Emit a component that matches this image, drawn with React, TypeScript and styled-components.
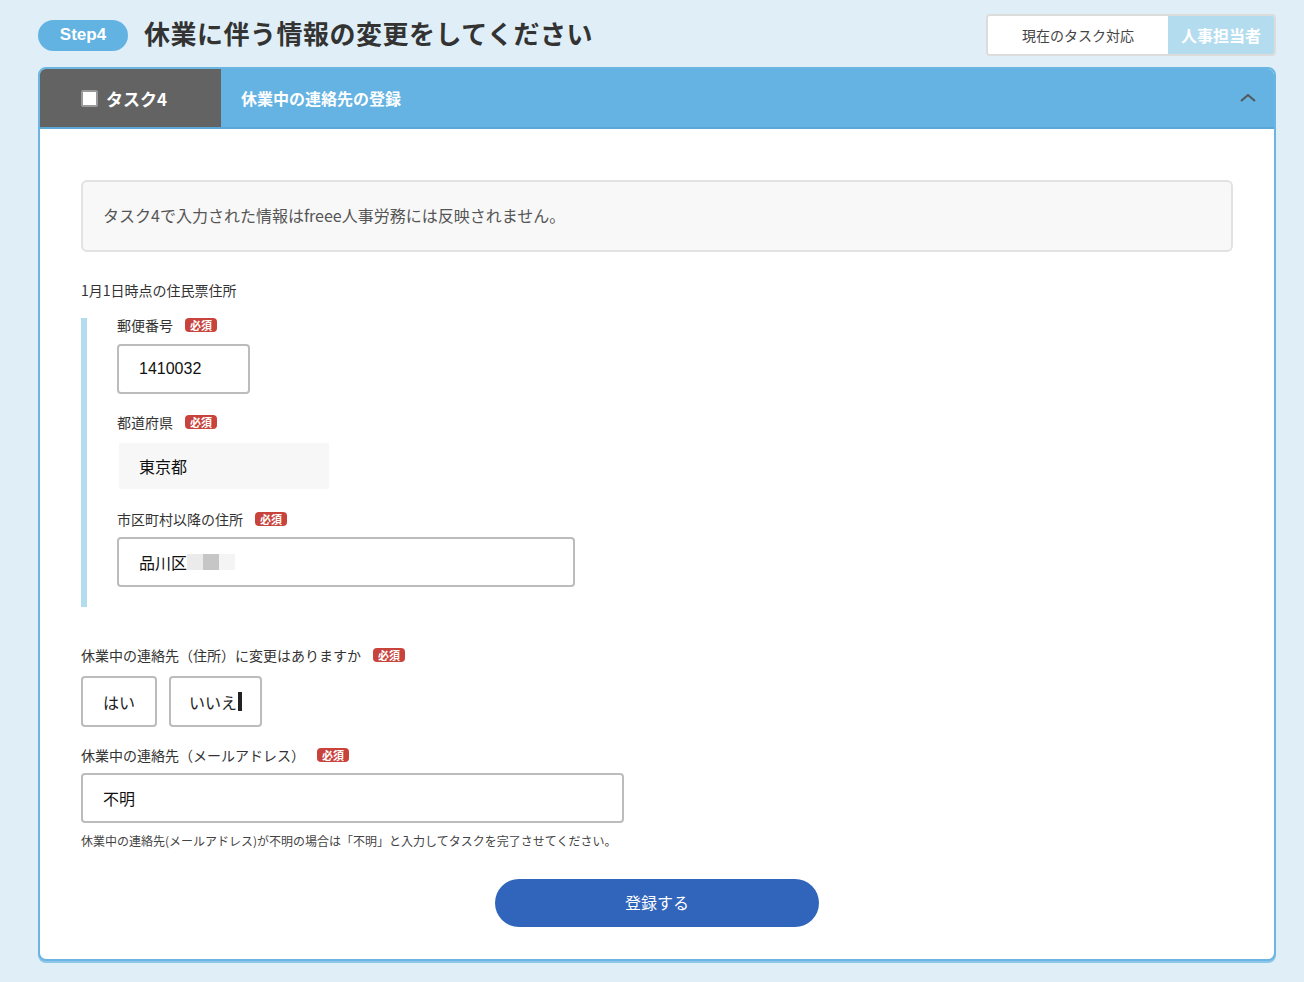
import React from "react";
import styled, { createGlobalStyle } from "styled-components";

const Global = createGlobalStyle`
  html, body { margin: 0; padding: 0; background: #e0eff7; }
  body { font-family: "Noto Sans CJK JP", "Noto Sans", "Liberation Sans", sans-serif; color: #333; }
  * { box-sizing: border-box; }
`;

const Page = styled.div`
  padding: 14px 28px 22px 38px;
`;

const TopBar = styled.div`
  display: flex;
  align-items: center;
  justify-content: space-between;
  margin-bottom: 11px;
`;

const TitleGroup = styled.div`
  display: flex;
  align-items: center;
  gap: 16px;
`;

const StepBadge = styled.div`
  width: 90px;
  height: 31px;
  border-radius: 16px;
  background: #62b2e2;
  color: #fff;
  font-family: "Liberation Sans", "Noto Sans", sans-serif;
  font-size: 17px;
  font-weight: 700;
  display: flex;
  align-items: center;
  justify-content: center;
`;

const Title = styled.h1`
  margin: 0 0 4px 0;
  font-size: 26px;
  line-height: 1.2;
  font-weight: 700;
  color: #333;
  letter-spacing: 0.5px;
`;

const Toggle = styled.div`
  display: flex;
  height: 42px;
  border: 2px solid #dcdcdc;
  border-radius: 4px;
  overflow: hidden;
`;

const ToggleItem = styled.div<{ $active?: boolean }>`
  display: flex;
  align-items: center;
  justify-content: center;
  width: ${(p) => (p.$active ? "106px" : "180px")};
  background: ${(p) => (p.$active ? "#b3dcef" : "#fff")};
  color: ${(p) => (p.$active ? "#fff" : "#444")};
  font-size: ${(p) => (p.$active ? "16px" : "14px")};
  font-weight: ${(p) => (p.$active ? 700 : 400)};
`;

const Card = styled.div`
  border: 2px solid #6bb5e2;
  border-radius: 8px;
  background: #fff;
  overflow: hidden;
  box-shadow: 0 2px 0 #8cc6e8;
`;

const CardHeader = styled.div`
  display: flex;
  height: 60px;
  background: #64b3e2;
  border-bottom: 2px solid #5aa8d8;
`;

const TaskTab = styled.div`
  width: 181px;
  background: #636363;
  display: flex;
  align-items: center;
  padding-left: 41px;
  gap: 8px;
  color: #fff;
  font-size: 17px;
  font-weight: 700;
`;

const CheckBox = styled.span`
  width: 17px;
  height: 17px;
  background: #fff;
  border: 2px solid #999;
  border-radius: 2px;
  display: inline-block;
`;

const HeaderTitle = styled.div`
  flex: 1;
  display: flex;
  align-items: center;
  justify-content: space-between;
  padding: 0 17px 0 20px;
  color: #fff;
  font-size: 16px;
  font-weight: 700;
`;

const CardBody = styled.div`
  padding: 51px 41px 32px 41px;
`;

const Notice = styled.div`
  height: 72px;
  background: #f8f8f8;
  border: 2px solid #e2e2e2;
  border-radius: 6px;
  display: flex;
  align-items: center;
  padding: 0 0 2px 20px;
  font-size: 16px;
  color: #555;
`;

const SectionLabel = styled.div`
  margin-top: 28px;
  font-size: 14px;
  line-height: 20px;
  color: #333;
`;

const AddressGroup = styled.div`
  margin-top: 18px;
  border-left: 6px solid #b3dcef;
  padding: 0 0 20px 30px;
`;

const Field = styled.div<{ $gap?: number }>`
  margin-top: ${(p) => p.$gap ?? 0}px;
`;

const Label = styled.div`
  display: flex;
  align-items: center;
  gap: 12px;
  font-size: 14px;
  line-height: 14px;
  color: #333;
  height: 14px;
`;

const Required = styled.span`
  display: inline-flex;
  align-items: center;
  justify-content: center;
  height: 14px;
  padding: 0 5px;
  border-radius: 4px;
  background: #c8433c;
  color: #fff;
  font-size: 11px;
  font-weight: 700;
  line-height: 1;
`;

const Input = styled.div<{ $w: number; $top?: number }>`
  margin-top: ${(p) => p.$top ?? 12}px;
  width: ${(p) => p.$w}px;
  height: 50px;
  border: 2px solid #bcbcbc;
  border-radius: 4px;
  background: #fff;
  display: flex;
  align-items: center;
  padding-left: 20px;
  font-size: 16px;
  color: #111;
`;

const NumText = styled.span`
  font-family: "Liberation Sans", "Noto Sans", sans-serif;
`;

const ReadOnly = styled.div`
  margin-top: 14px;
  margin-left: 2px;
  width: 210px;
  height: 46px;
  background: #f7f7f7;
  display: flex;
  align-items: center;
  padding-left: 20px;
  font-size: 16px;
  color: #111;
`;

const Blur = styled.span<{ $c: string; $w: number }>`
  display: inline-block;
  width: ${(p) => p.$w}px;
  height: 16px;
  background: ${(p) => p.$c};
`;

const Question = styled.div`
  margin-top: 41px;
`;

const Choices = styled.div`
  display: flex;
  gap: 12px;
  margin-top: 14px;
`;

const Choice = styled.div<{ $w: number }>`
  width: ${(p) => p.$w}px;
  height: 51px;
  border: 2px solid #bcbcbc;
  border-radius: 4px;
  display: flex;
  align-items: center;
  justify-content: center;
  font-size: 16px;
  color: #222;
`;

const Caret = styled.span`
  display: inline-block;
  width: 4px;
  height: 19px;
  background: #222;
  margin-left: 1px;
`;

const Help = styled.div`
  margin-top: 9px;
  font-size: 12px;
  color: #444;
`;

const SubmitRow = styled.div`
  display: flex;
  justify-content: center;
  margin-top: 30px;
`;

const Submit = styled.button`
  width: 324px;
  height: 48px;
  border: none;
  border-radius: 24px;
  background: #3164bb;
  color: #fff;
  font-family: inherit;
  font-size: 16px;
  padding-bottom: 3px;
  cursor: pointer;
`;

export default function App() {
  return (
    <>
      <Global />
      <Page>
        <TopBar>
          <TitleGroup>
            <StepBadge>Step4</StepBadge>
            <Title>休業に伴う情報の変更をしてください</Title>
          </TitleGroup>
          <Toggle>
            <ToggleItem>現在のタスク対応</ToggleItem>
            <ToggleItem $active>人事担当者</ToggleItem>
          </Toggle>
        </TopBar>
        <Card>
          <CardHeader>
            <TaskTab>
              <CheckBox />
              タスク4
            </TaskTab>
            <HeaderTitle>
              休業中の連絡先の登録
              <svg width="18" height="12" viewBox="0 0 18 12">
                <path d="M2 9 L9 3 L16 9" fill="none" stroke="#555" strokeWidth="2" />
              </svg>
            </HeaderTitle>
          </CardHeader>
          <CardBody>
            <Notice>タスク4で入力された情報はfreee人事労務には反映されません。</Notice>
            <SectionLabel>1月1日時点の住民票住所</SectionLabel>
            <AddressGroup>
              <Field>
                <Label>
                  郵便番号<Required>必須</Required>
                </Label>
                <Input $w={133} $top={12}>
                  <NumText>1410032</NumText>
                </Input>
              </Field>
              <Field $gap={21}>
                <Label>
                  都道府県<Required>必須</Required>
                </Label>
                <ReadOnly>東京都</ReadOnly>
              </Field>
              <Field $gap={23}>
                <Label>
                  市区町村以降の住所<Required>必須</Required>
                </Label>
                <Input $w={458} $top={11}>
                  品川区
                  <Blur $c="#ebebeb" $w={16} />
                  <Blur $c="#c6c6c6" $w={16} />
                  <Blur $c="#f4f4f4" $w={16} />
                </Input>
              </Field>
            </AddressGroup>
            <Question>
              <Label>
                休業中の連絡先（住所）に変更はありますか<Required>必須</Required>
              </Label>
              <Choices>
                <Choice $w={76}>はい</Choice>
                <Choice $w={93}>
                  いいえ<Caret />
                </Choice>
              </Choices>
            </Question>
            <Field $gap={21}>
              <Label>
                休業中の連絡先（メールアドレス）<Required>必須</Required>
              </Label>
              <Input $w={543} $top={11}>不明</Input>
            </Field>
            <Help>休業中の連絡先(メールアドレス)が不明の場合は「不明」と入力してタスクを完了させてください。</Help>
            <SubmitRow>
              <Submit>登録する</Submit>
            </SubmitRow>
          </CardBody>
        </Card>
      </Page>
    </>
  );
}
